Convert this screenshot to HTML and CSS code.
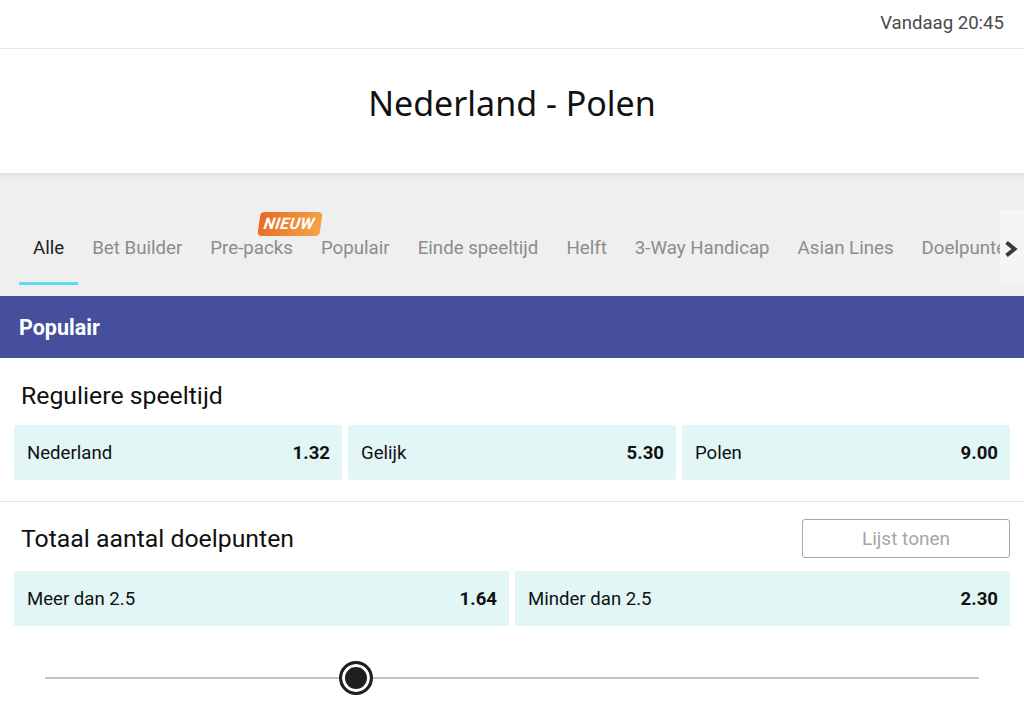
FILE: index.html
```html
<!DOCTYPE html>
<html lang="nl">
<head>
  <meta charset="UTF-8">
  <meta name="viewport" content="width=device-width, initial-scale=1.0">
  <title>Nederland - Polen</title>
  <link rel="stylesheet" href="styles.css">
</head>
<body>
  <div class="topbar">Vandaag 20:45</div>

  <div class="match">
    <h1>Nederland - Polen</h1>
  </div>

  <div class="tabs-wrap">
    <div class="tabs">
      <div class="tab active">Alle</div>
      <div class="tab">Bet Builder</div>
      <div class="tab">Pre-packs<span class="badge">NIEUW</span></div>
      <div class="tab">Populair</div>
      <div class="tab">Einde speeltijd</div>
      <div class="tab">Helft</div>
      <div class="tab">3-Way Handicap</div>
      <div class="tab">Asian Lines</div>
      <div class="tab">Doelpunten</div>
      <div class="tab">Correcte score</div>
    </div>
    <button class="tabs-next">
      <svg width="16" height="18" viewBox="0 0 16 18"><path d="M3.5 2.5 L11.5 9 L3.5 15.5" fill="none" stroke="#3a3a3a" stroke-width="4"/></svg>
    </button>
  </div>

  <div class="group-head">Populair</div>

  <div class="market">
    <div class="market-head">
      <h2>Reguliere speeltijd</h2>
    </div>
    <div class="odds three">
      <div class="odd"><span>Nederland</span><b>1.32</b></div>
      <div class="odd"><span>Gelijk</span><b>5.30</b></div>
      <div class="odd"><span>Polen</span><b>9.00</b></div>
    </div>
  </div>

  <div class="market second">
    <div class="market-head">
      <h2>Totaal aantal doelpunten</h2>
      <button class="list-btn">Lijst tonen</button>
    </div>
    <div class="odds two">
      <div class="odd"><span>Meer dan 2.5</span><b>1.64</b></div>
      <div class="odd"><span>Minder dan 2.5</span><b>2.30</b></div>
    </div>
  </div>

  <div class="slider">
    <div class="track"></div>
    <div class="thumb" style="left: 294px"></div>
  </div>
</body>
</html>
```

FILE: styles.css
```css
* {
  box-sizing: border-box;
}
body {
  margin: 0;
  background: #ffffff;
  color: #111;
  font-family: Roboto, 'Liberation Sans', sans-serif;
  overflow: hidden;
}
.topbar {
  height: 49px;
  border-bottom: 1px solid #e6e6e6;
  display: flex;
  align-items: center;
  justify-content: flex-end;
  padding: 0 20px 2px 0;
  font-size: 18.6px;
  color: #4a4a4a;
}
.match {
  height: 124px;
  display: flex;
  align-items: center;
  justify-content: center;
}
.match h1 {
  margin: 0 0 16px;
  font-family: 'Noto Sans', 'Open Sans', sans-serif;
  font-weight: 400;
  font-size: 34px;
  color: #111;
}
.tabs-wrap {
  position: relative;
  height: 123px;
  background: #efefef;
  box-shadow: inset 0 6px 6px -4px rgba(0, 0, 0, 0.08);
  padding-top: 37px;
  overflow: hidden;
}
.tabs {
  display: flex;
  padding-left: 19px;
  white-space: nowrap;
}
.tab {
  position: relative;
  height: 75px;
  padding: 4px 14px 0;
  display: flex;
  align-items: center;
  font-size: 18.7px;
  color: #8c8c8c;
  border-bottom: 3px solid transparent;
}
.tab.active {
  color: #222;
  border-bottom-color: #5fdcee;
}
.badge {
  position: absolute;
  left: 63px;
  top: 2px;
  padding: 1px 6px 2px 5px;
  border-radius: 4px;
  background: linear-gradient(100deg, #e86a26, #f3a548);
  color: #fff;
  font-size: 16px;
  font-weight: 700;
  font-style: italic;
  letter-spacing: 0.5px;
  transform: skewX(-8deg);
  line-height: 21px;
}
.tabs-next {
  position: absolute;
  right: 0;
  top: 37px;
  width: 24px;
  height: 75px;
  border: none;
  padding: 2px 0 0 3px;
  background: #f5f5f7;
  display: flex;
  align-items: center;
}
.group-head {
  height: 62px;
  background: #464f9b;
  color: #fff;
  font-size: 21.5px;
  font-weight: 700;
  display: flex;
  align-items: center;
  padding: 0 0 0 19px;
}
.market {
  padding: 22px 14px 21px;
}
.market.second {
  border-top: 1px solid #e2e2e2;
  padding-top: 17px;
}
.market-head {
  display: flex;
  align-items: center;
  justify-content: space-between;
  min-height: 30px;
  margin-bottom: 15px;
  padding-left: 7px;
}
.market.second .market-head {
  margin-bottom: 13px;
}
.market-head h2 {
  margin: 0;
  font-size: 24.8px;
  font-weight: 400;
  color: #111;
}
.list-btn {
  width: 208px;
  height: 39px;
  border: 1px solid #a8a8a8;
  border-radius: 3px;
  background: #fff;
  color: #a6a6a6;
  font-family: Roboto, sans-serif;
  font-size: 19px;
}
.odds {
  display: grid;
  gap: 6px;
}
.odds.three {
  grid-template-columns: repeat(3, 1fr);
}
.odds.two {
  grid-template-columns: repeat(2, 1fr);
}
.odd {
  height: 55px;
  background: #e2f6f6;
  border-radius: 2px;
  display: flex;
  align-items: center;
  justify-content: space-between;
  padding: 0 12px 0 13px;
  font-size: 18.6px;
  color: #111;
}
.odd b {
  font-weight: 700;
}
.slider {
  position: relative;
  margin: 0 45px;
  height: 60px;
}
.track {
  position: absolute;
  left: 0;
  right: 0;
  top: 30px;
  height: 2px;
  background: #c4c4c4;
}
.thumb {
  position: absolute;
  top: 14px;
  width: 34px;
  height: 34px;
  border-radius: 50%;
  background: #1f1f1f;
  border: 3px solid #1f1f1f;
  box-shadow: inset 0 0 0 3px #fff;
}
```
